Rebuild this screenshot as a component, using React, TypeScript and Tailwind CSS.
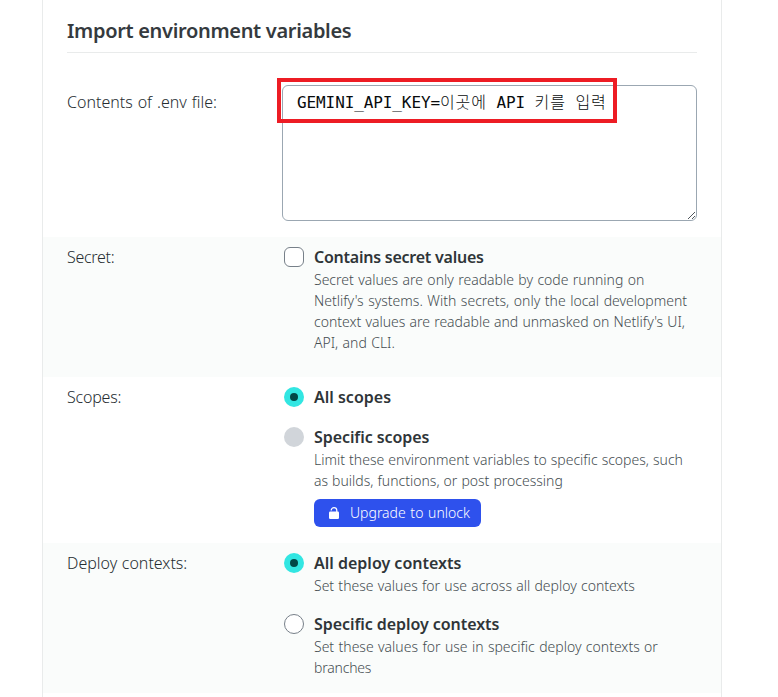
import type { ReactNode } from "react";

function Radio({ state }: { state: "on" | "off" | "disabled" }) {
  if (state === "on") {
    return (
      <span className="flex size-5 items-center justify-center rounded-full bg-[#32e6e2]">
        <span className="block size-2 rounded-full bg-[#014847]" />
      </span>
    );
  }
  if (state === "disabled") return <span className="block size-5 rounded-full bg-[#d1d5da]" />;
  return <span className="block size-5 rounded-full border border-[#778089] bg-white" />;
}

function Option({ control, title, children }: { control: ReactNode; title: ReactNode; children?: ReactNode }) {
  return (
    <div className="flex gap-[10px]">
      <div className="pt-[2px]">{control}</div>
      <div>
        <div className="h-6 text-base leading-6 font-semibold text-[#2f3538]">{title}</div>
        {children && <div className="text-sm leading-[21px] font-[350] text-[#454d51]">{children}</div>}
      </div>
    </div>
  );
}

function Line({ className, children }: { className: string; children: ReactNode }) {
  return (
    <div className="whitespace-nowrap">
      <span className={className}>{children}</span>
    </div>
  );
}

function Row({ label, className, children }: { label: ReactNode; className: string; children: ReactNode }) {
  return (
    <section className={`flex pl-6 pt-2 ${className}`}>
      <div className="w-[217px] shrink-0 text-base leading-6 font-[350] text-[#262d31]">{label}</div>
      <div>{children}</div>
    </section>
  );
}

export default function App() {
  return (
    <div className="h-[697px] overflow-hidden bg-white font-['Noto_Sans','Noto_Sans_CJK_KR',sans-serif]">
      <main className="ml-[42px] h-full w-[680px] border-x border-[#e9ebeb]">
        <header className="mx-6 h-[53px] border-b border-[#e9ebeb] pt-4">
          <h1 className="text-xl leading-[30px] font-semibold text-[#353a3e]">
            <span className="tracking-[-0.32px]">Import environment variables</span>
          </h1>
        </header>

        <section className="flex h-[184px] pl-6 pt-8">
          <div className="w-[215px] shrink-0 pt-[5px] text-base leading-6 font-[350] text-[#262d31]">
            <span className="[word-spacing:0.8px]">Contents of .env file:</span>
          </div>
          <div className="relative h-[136px] w-[415px] rounded-md border border-[#9ba7b2] bg-white pl-[14px] pt-[5px]">
            <div className="text-base leading-6 whitespace-pre text-[#080b0d] font-['DejaVu_Sans_Mono','Noto_Sans_CJK_KR',monospace]">
              <span className="tracking-[-0.1px]">GEMINI_API_KEY=</span>
              <span className="font-light tracking-[0.9px]">이곳에</span>
              <span className="tracking-[-0.1px]"> API </span>
              <span className="font-light tracking-[0.9px]">키를</span>
              <span> </span>
              <span className="font-light tracking-[0.9px]">입력</span>
            </div>
            <svg className="absolute right-0 bottom-0 size-[9px]" viewBox="0 0 9 9" stroke="#50565c" fill="none">
              <path d="M1 8 8 1M5 8l3-3" />
            </svg>
            <div className="absolute -top-2 -left-[6px] h-[45px] w-[340px] border-4 border-[#ed1c24]" />
          </div>
        </section>

        <Row label={<span className="tracking-[-0.3px]">Secret:</span>} className="h-[140px] bg-[#fafcfb]">
          <Option
            control={<span className="block size-5 rounded-md border border-[#778089] bg-white" />}
            title={<span className="tracking-[-0.24px]">Contains secret values</span>}
          >
            <Line className="[word-spacing:0.75px]">Secret values are only readable by code running on</Line>
            <Line className="[word-spacing:0.9px]">Netlify's systems. With secrets, only the local development</Line>
            <Line className="[word-spacing:0.5px]">context values are readable and unmasked on Netlify's UI,</Line>
            <Line className="[word-spacing:0.7px]">API, and CLI.</Line>
          </Option>
        </Row>

        <Row label={<span className="tracking-[-0.2px]">Scopes:</span>} className="h-[166px]">
          <div className="flex flex-col gap-4">
            <Option control={<Radio state="on" />} title={<span>All scopes</span>} />
            <Option control={<Radio state="disabled" />} title={<span className="tracking-[-0.08px]">Specific scopes</span>}>
              <Line className="[word-spacing:0.4px]">Limit these environment variables to specific scopes, such</Line>
              <Line className="[word-spacing:0.4px]">as builds, functions, or post processing</Line>
              <button className="mt-2 flex h-7 w-[167px] items-center rounded-md bg-[#2e51ed] pl-[15px] text-sm text-white">
                <svg className="mr-[11px] h-3 w-[10px]" viewBox="0 0 10 12">
                  <path d="M2.2 3.4C2.2-.2 7.8-.2 7.8 3.4V5" fill="none" stroke="currentColor" strokeWidth="1.2" />
                  <rect y="4.5" width="10" height="7.5" rx="1.2" fill="currentColor" />
                </svg>
                <span className="whitespace-nowrap [word-spacing:1px]">Upgrade to unlock</span>
              </button>
            </Option>
          </div>
        </Row>

        <Row label={<span className="[word-spacing:0.5px]">Deploy contexts:</span>} className="h-[150px] bg-[#fafcfb]">
          <div className="flex flex-col gap-4">
            <Option control={<Radio state="on" />} title={<span>All deploy contexts</span>}>
              <Line className="[word-spacing:0.6px]">Set these values for use across all deploy contexts</Line>
            </Option>
            <Option control={<Radio state="off" />} title={<span className="tracking-[-0.06px]">Specific deploy contexts</span>}>
              <Line className="[word-spacing:0.75px]">Set these values for use in specific deploy contexts or</Line>
              <Line className="tracking-[-0.2px]">branches</Line>
            </Option>
          </div>
        </Row>
      </main>
    </div>
  );
}
